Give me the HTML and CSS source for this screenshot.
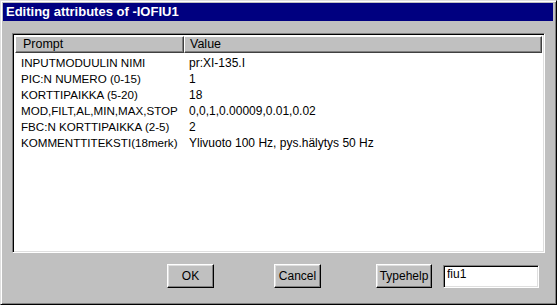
FILE: index.html
```html
<!DOCTYPE html>
<html lang="fi">
<head>
  <meta charset="UTF-8">
  <title>Editing attributes of -IOFIU1</title>
  <link rel="stylesheet" href="styles.css">
</head>
<body>

  <div class="window">
    <div class="titlebar">Editing attributes of -IOFIU1</div>

    <div class="content">
      <div class="listbox">
        <div class="header">
          <div class="hcell prompt">Prompt</div>
          <div class="hcell value">Value</div>
        </div>
        <div class="rows">
          <div class="row"><span class="c1">INPUTMODUULIN NIMI</span><span class="c2">pr:XI-135.I</span></div>
          <div class="row"><span class="c1">PIC:N NUMERO (0-15)</span><span class="c2">1</span></div>
          <div class="row"><span class="c1">KORTTIPAIKKA (5-20)</span><span class="c2">18</span></div>
          <div class="row"><span class="c1">MOD,FILT,AL,MIN,MAX,STOP</span><span class="c2">0,0,1,0.00009,0.01,0.02</span></div>
          <div class="row"><span class="c1">FBC:N KORTTIPAIKKA (2-5)</span><span class="c2">2</span></div>
          <div class="row"><span class="c1">KOMMENTTITEKSTI(18merk)</span><span class="c2">Ylivuoto 100 Hz, pys.hälytys 50 Hz</span></div>
        </div>
      </div>

      <div class="buttons">
        <button class="btn ok">OK</button>
        <button class="btn cancel">Cancel</button>
        <button class="btn typehelp">Typehelp</button>
        <input class="field" type="text" value="fiu1">
      </div>
    </div>
  </div>

</body>
</html>
```

FILE: styles.css
```css
body {
  margin: 0;
  padding: 0;
  background: #c0c0c0;
  font-family: "Liberation Sans", Arial, sans-serif;
  font-size: 12px;
  color: #000;
}

.window {
  width: 557px;
  height: 305px;
  box-sizing: border-box;
  background: #c0c0c0;
  border: 1px solid;
  border-color: #dfdfdf #000 #000 #dfdfdf;
  box-shadow: inset 1px 1px #fff, inset -1px -1px #808080;
  padding: 2px 3px 3px 2px;
}

.titlebar {
  height: 18px;
  line-height: 18px;
  background: #000080;
  color: #fff;
  font-weight: bold;
  font-size: 13px;
  padding-left: 3px;
}

.content {
  padding: 12px 0 0 9px;
}

/* sunken list with column header */
.listbox {
  width: 533px;
  height: 220px;
  box-sizing: border-box;
  background: #fff;
  border: 1px solid;
  border-color: #808080 #fff #fff #808080;
  box-shadow: inset 1px 1px #000, inset -1px -1px #dfdfdf;
  padding: 2px;
}

.header {
  display: flex;
  height: 17px;
}

.hcell {
  box-sizing: border-box;
  height: 17px;
  line-height: 15px;
  background: #c0c0c0;
  border: 1px solid;
  border-color: #fff #404040 #404040 #fff;
  box-shadow: inset -1px -1px #808080;
  font-size: 12.5px;
}

.prompt {
  width: 169px;
  padding-left: 7px;
}

.value {
  flex: 1;
  padding-left: 5px;
}

.rows {
  padding-top: 2px;
}

.row {
  display: flex;
  height: 16px;
  line-height: 16px;
}

.c1 {
  width: 169px;
  padding-left: 6px;
  box-sizing: border-box;
  font-size: 11.6px;
}

.c2 {
  padding-left: 5px;
}

.buttons {
  display: flex;
  align-items: flex-start;
  margin-top: 11px;
  padding-left: 155px;
}

.btn {
  height: 24px;
  box-sizing: border-box;
  background: #c0c0c0;
  font-family: "Liberation Sans", Arial, sans-serif;
  font-size: 12px;
  color: #000;
  padding: 0;
  border: 1px solid;
  border-color: #fff #000 #000 #fff;
  box-shadow: inset -1px -1px #808080, inset 1px 1px #dfdfdf;
}

.ok {
  width: 47px;
}

.cancel {
  width: 47px;
  margin-left: 60px;
}

.typehelp {
  width: 56px;
  margin-left: 55px;
}

.field {
  width: 96px;
  height: 23px;
  box-sizing: border-box;
  margin: 1px 0 0 11px;
  padding: 0 3px 6px;
  border: 1px solid;
  border-color: #808080 #fff #fff #808080;
  box-shadow: inset 1px 1px #000, inset -1px -1px #dfdfdf;
  font-family: "Liberation Sans", Arial, sans-serif;
  font-size: 12px;
}
```
